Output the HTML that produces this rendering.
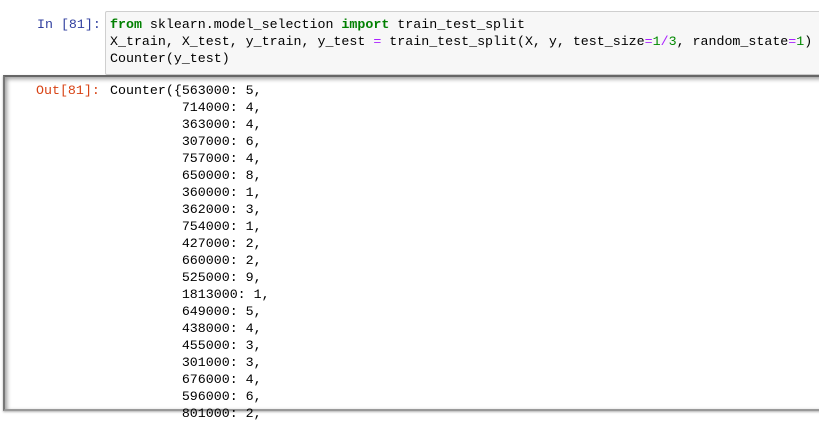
<!DOCTYPE html>
<html><head><style>
body{margin:0;width:819px;height:413px;overflow:hidden;background:#fff;font-family:"Liberation Mono",monospace;font-size:13.3px;}
.in{position:absolute;left:105px;top:11px;width:720px;height:62px;background:#f7f7f7;border:1px solid #cfcfcf;border-radius:2px;}
pre{margin:0;font-family:inherit;font-size:inherit;line-height:17px;}
.pin{position:absolute;left:37px;top:16px;color:#303f9f;}
.code{position:absolute;left:110px;top:16px;color:#000;}
.k{color:#008000;font-weight:bold}
.n{color:#080}
.out{position:absolute;left:3px;top:75px;width:830px;height:332px;border-left:2px solid #777;border-top:2px solid #666;border-bottom:2px solid #999;box-shadow:inset 2px 2px 4px rgba(0,0,0,.4),0 1px 2px rgba(0,0,0,.3);}
.pout{position:absolute;left:36px;top:82px;color:#d84315;}
.ocode{position:absolute;left:110px;top:82px;color:#000;}
</style></head><body>
<div class="in"></div>
<pre class="pin">In [81]:</pre>
<pre class="code"><span class="k">from</span> sklearn.model_selection <span class="k">import</span> train_test_split
X_train, X_test, y_train, y_test <span style="color:#a2f">=</span> train_test_split(X, y, test_size<span style="color:#a2f">=</span><span class="n">1</span><span style="color:#a2f">/</span><span class="n">3</span>, random_state<span style="color:#a2f">=</span><span class="n">1</span>)
Counter(y_test)</pre>
<div class="out"></div>
<pre class="pout">Out[81]:</pre>
<pre class="ocode">Counter({563000: 5,
         714000: 4,
         363000: 4,
         307000: 6,
         757000: 4,
         650000: 8,
         360000: 1,
         362000: 3,
         754000: 1,
         427000: 2,
         660000: 2,
         525000: 9,
         1813000: 1,
         649000: 5,
         438000: 4,
         455000: 3,
         301000: 3,
         676000: 4,
         596000: 6,
         801000: 2,</pre>
</body></html>
